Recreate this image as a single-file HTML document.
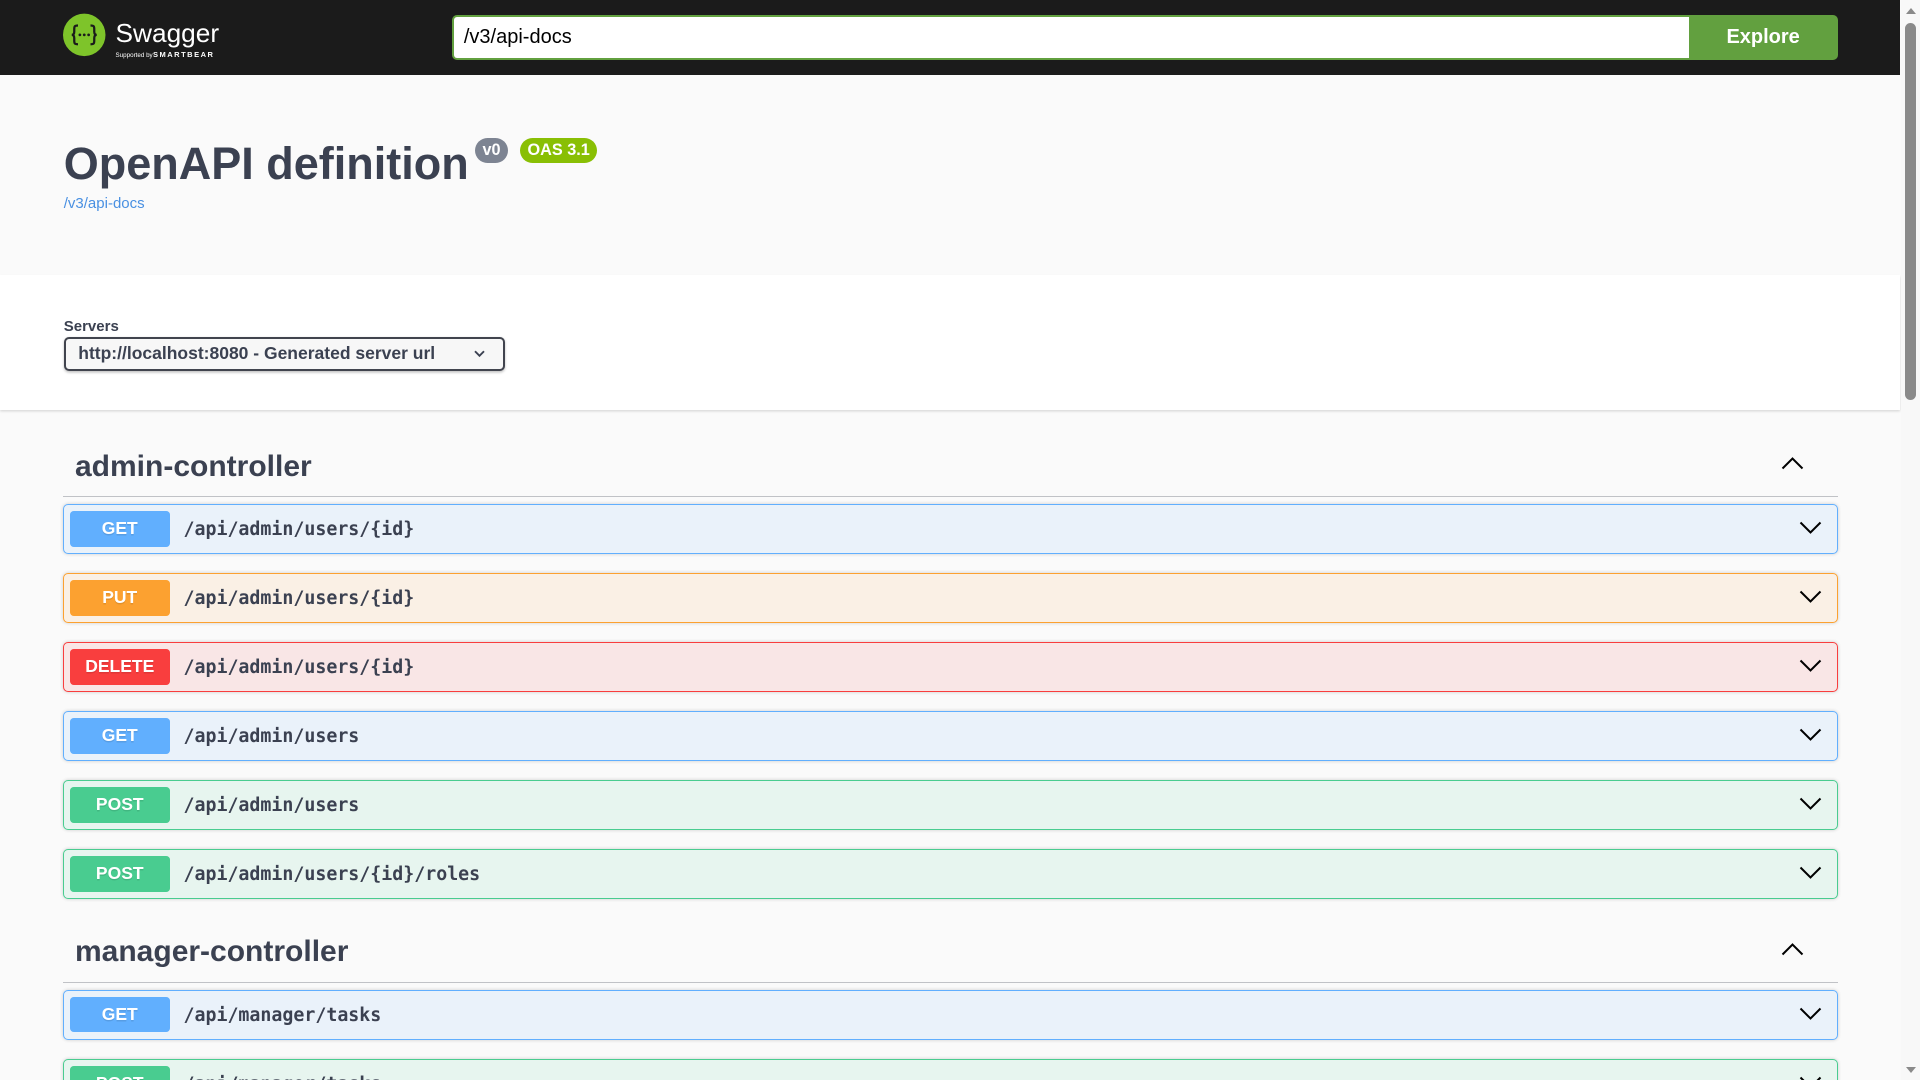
<!DOCTYPE html>
<html><head><meta charset="utf-8"><style>
html,body{margin:0;padding:0;width:1920px;height:1080px;overflow:hidden;background:#fafafa;}
#z{zoom:1.25;width:1520px;font-family:"Liberation Sans",sans-serif;color:#3b4151;}
.wrap{width:1420px;margin:0 auto;position:relative;}
.topbar{background:#1b1b1b;height:60px;}
.logo{position:absolute;left:0;top:10px;width:160px;height:40px;}
.url{position:absolute;left:311.5px;top:12px;width:1009px;height:36px;box-sizing:border-box;border:2px solid #62a03f;border-right:none;border-radius:4px 0 0 4px;background:#fff;font-size:16px;line-height:32px;padding-left:8px;color:#000;}
.explore{position:absolute;left:1301px;top:12px;width:119px;height:36px;background:#62a03f;border-radius:0 4px 4px 0;color:#fff;font-weight:bold;font-size:16px;line-height:36px;text-align:center;}
.info{height:160px;position:relative;}
.title{position:absolute;left:1px;top:49px;font-size:36px;font-weight:bold;line-height:44px;}
.badge{position:absolute;top:50px;height:20px;line-height:20px;border-radius:57px;color:#fff;font-weight:bold;font-size:13px;padding:0 6px;}
.link{position:absolute;left:1px;top:96px;font-size:12px;color:#4990e2;}
.scheme{background:#fff;height:108px;box-shadow:0 1px 2px 0 rgba(0,0,0,.15);position:relative;}
.slabel{position:absolute;left:1px;top:34px;font-size:12px;font-weight:bold;}
.select{position:absolute;left:1px;top:49.5px;width:353px;height:27.5px;box-sizing:border-box;border:2px solid #41444e;border-radius:4px;background:#f7f7f7;box-shadow:0 1px 2px 0 rgba(0,0,0,.25);font-size:14px;font-weight:bold;line-height:23px;padding-left:10px;}
.tag{height:51px;border-bottom:1px solid rgba(59,65,81,.3);position:relative;margin-bottom:5.5px;}
.tag h3{margin:0;position:absolute;left:10px;top:12px;font-size:24px;line-height:30px;}
.tag svg{position:absolute;right:26px;top:15px;}
.op{height:40.2px;box-sizing:border-box;border:1px solid;border-radius:4px;margin-bottom:15px;position:relative;box-shadow:0 0 3px rgba(0,0,0,.19);}
.m{position:absolute;left:5px;top:5px;width:80px;height:28.2px;line-height:28.2px;border-radius:3px;color:#fff;font-weight:bold;font-size:14px;text-align:center;text-shadow:0 1px 0 rgba(0,0,0,.1);}
.p{position:absolute;left:96px;top:0;line-height:40px;font-family:"DejaVu Sans Mono",monospace;font-weight:bold;font-size:14.6px;color:#3b4151;}
.op svg{position:absolute;right:11px;top:8px;}
.get{background:rgba(97,175,254,.1);border-color:#61affe}.get .m{background:#61affe}
.put{background:rgba(252,161,48,.1);border-color:#fca130}.put .m{background:#fca130}
.del{background:rgba(249,62,62,.1);border-color:#f93e3e}.del .m{background:#f93e3e}
.post{background:rgba(73,204,144,.1);border-color:#49cc90}.post .m{background:#49cc90}
.sb{position:fixed;right:0;top:0;width:19px;height:1080px;background:#f8f8f8;}
</style></head><body>
<div id="z">
<div class="topbar"><div class="wrap">
 <svg class="logo" viewBox="0 0 160 40"><circle cx="17" cy="17.5" r="17" fill="#7ec42a"/>
 <path d="M12 10c-3 0-3 1-3 3v2c0 2-1 2.5-2 2.5c1 0 2 .5 2 2.5v2c0 2 0 3 3 3" stroke="#1b1b1b" stroke-width="1.8" fill="none"/>
 <path d="M22 10c3 0 3 1 3 3v2c0 2 1 2.5 2 2.5c-1 0-2 .5-2 2.5v2c0 2 0 3-3 3" stroke="#1b1b1b" stroke-width="1.8" fill="none"/>
 <circle cx="13.5" cy="17.5" r="1.1" fill="#1b1b1b"/><circle cx="17" cy="17.5" r="1.1" fill="#1b1b1b"/><circle cx="20.5" cy="17.5" r="1.1" fill="#1b1b1b"/>
 <text x="42" y="23" font-family="Liberation Sans,sans-serif" font-size="21" fill="#fff">Swagger</text><text x="118" y="24" font-size="3" fill="#fff">.</text><text x="42" y="35" font-family="Liberation Sans,sans-serif" font-size="5" fill="#fff">Supported by</text><text x="72" y="35" font-family="Liberation Sans,sans-serif" font-weight="bold" font-size="6" letter-spacing="1.2" fill="#fff">SMARTBEAR</text></svg>
 <div class="url">/v3/api-docs</div><div class="explore">Explore</div>
</div></div>
<div class="info wrap">
 <div class="title">OpenAPI definition</div>
 <span class="badge" style="left:330px;background:#7d8492">v0</span>
 <span class="badge" style="left:366px;background:#89bf04">OAS 3.1</span>
 <div class="link">/v3/api-docs</div>
</div>
<div class="scheme"><div class="wrap" style="height:108px">
 <div class="slabel">Servers</div>
 <div class="select">http://localhost:8080 - Generated server url<svg style="position:absolute;left:325px;top:6px" width="12" height="12" viewBox="0 0 20 20"><path d="M4 7l6 6 6-6" stroke="#3b4151" stroke-width="2.5" fill="none"/></svg></div>
</div></div>
<div class="wrap" style="padding-top:18px">
 <div class="tag"><h3>admin-controller</h3><svg width="20" height="20" viewBox="0 0 20 20"><path d="M2 14l8-8 8 8" stroke="#000" stroke-width="1.6" fill="none"/></svg></div>
 <div class="op get"><div class="m">GET</div><div class="p">/api/admin/users/{id}</div><svg width="20" height="20" viewBox="0 0 20 20"><path d="M2 6l8 8 8-8" stroke="#000" stroke-width="1.6" fill="none"/></svg></div>
 <div class="op put"><div class="m">PUT</div><div class="p">/api/admin/users/{id}</div><svg width="20" height="20" viewBox="0 0 20 20"><path d="M2 6l8 8 8-8" stroke="#000" stroke-width="1.6" fill="none"/></svg></div>
 <div class="op del"><div class="m">DELETE</div><div class="p">/api/admin/users/{id}</div><svg width="20" height="20" viewBox="0 0 20 20"><path d="M2 6l8 8 8-8" stroke="#000" stroke-width="1.6" fill="none"/></svg></div>
 <div class="op get"><div class="m">GET</div><div class="p">/api/admin/users</div><svg width="20" height="20" viewBox="0 0 20 20"><path d="M2 6l8 8 8-8" stroke="#000" stroke-width="1.6" fill="none"/></svg></div>
 <div class="op post"><div class="m">POST</div><div class="p">/api/admin/users</div><svg width="20" height="20" viewBox="0 0 20 20"><path d="M2 6l8 8 8-8" stroke="#000" stroke-width="1.6" fill="none"/></svg></div>
 <div class="op post"><div class="m">POST</div><div class="p">/api/admin/users/{id}/roles</div><svg width="20" height="20" viewBox="0 0 20 20"><path d="M2 6l8 8 8-8" stroke="#000" stroke-width="1.6" fill="none"/></svg></div>
 <div class="tag"><h3>manager-controller</h3><svg width="20" height="20" viewBox="0 0 20 20"><path d="M2 14l8-8 8 8" stroke="#000" stroke-width="1.6" fill="none"/></svg></div>
 <div class="op get"><div class="m">GET</div><div class="p">/api/manager/tasks</div><svg width="20" height="20" viewBox="0 0 20 20"><path d="M2 6l8 8 8-8" stroke="#000" stroke-width="1.6" fill="none"/></svg></div>
 <div class="op post"><div class="m">POST</div><div class="p">/api/manager/tasks</div><svg width="20" height="20" viewBox="0 0 20 20"><path d="M2 6l8 8 8-8" stroke="#000" stroke-width="1.6" fill="none"/></svg></div>
</div>
</div>
<div class="sb">
 <svg style="position:absolute;left:4px;top:5px" width="12" height="10" viewBox="0 0 12 10"><path d="M1 9L6 3l5 6z" fill="#8a8a8a"/></svg>
 <div style="position:absolute;left:4px;top:23px;width:11px;height:377px;border-radius:6px;background:#8a8a8a"></div>
 <svg style="position:absolute;left:4px;top:1066px" width="12" height="10" viewBox="0 0 12 10"><path d="M1 1L6 7l5-6z" fill="#8a8a8a"/></svg>
</div>
</body></html>
